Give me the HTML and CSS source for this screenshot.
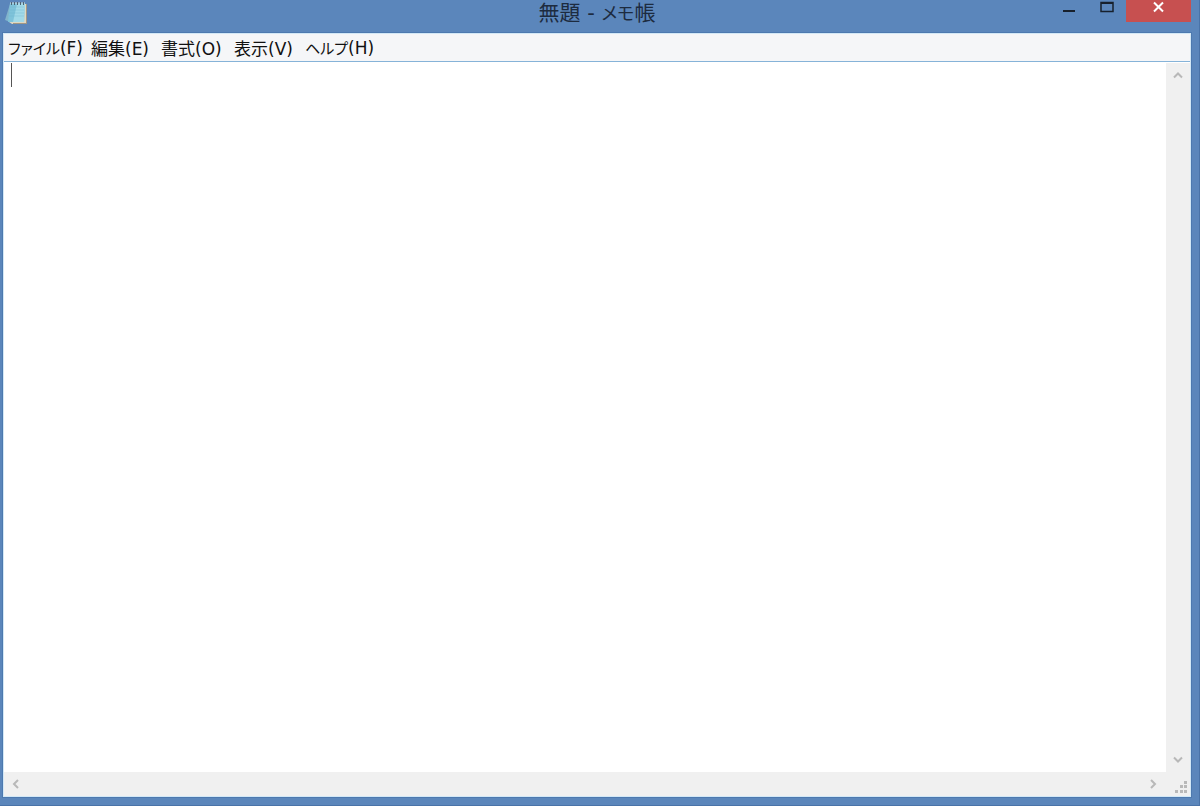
FILE: index.html
```html
<!DOCTYPE html>
<html lang="ja">
<head>
<meta charset="utf-8">
<title>無題 - メモ帳</title>
<link rel="stylesheet" href="styles.css">
</head>
<body>
<div class="window">
  <header class="titlebar">
    <svg class="app-icon" width="24" height="26" viewBox="0 0 24 26" aria-hidden="true">
      <path d="M5 4L0 20L5 22Z" fill="#82b4cb"/>
      <path d="M6 4H22V24H7L4 22Z" fill="#ded9c4"/>
      <path d="M21 4H22V24H8V23H21Z" fill="#a39783"/>
      <path d="M5 3H20L19 22H3Z" fill="#7fc3da"/>
      <path d="M12 4H20L19 22H8Z" fill="#a2dae8"/>
      <path d="M5 7H19M5 10H19M4 13H19M4 16H19" stroke="#6db3cc" stroke-width="1" opacity=".35"/>
      <path d="M5 3H20" stroke="#c9dbe2" stroke-width="1"/>
      <path d="M6.500 2V5M9.500 2V5M12.500 2V5M15.500 2V5M18.500 2V5" stroke="#4f6374" stroke-width="1"/>
    </svg>
    <h1 class="title">無題 - <span class="title-kana">メモ</span>帳</h1>
    <div class="window-buttons">
      <button class="window-button" type="button" aria-label="最小化">
        <svg width="14" height="14" viewBox="0 0 14 14"><path d="M1 11H13" stroke="#17202c" stroke-width="2"/></svg>
      </button>
      <button class="window-button" type="button" aria-label="最大化">
        <svg width="14" height="14" viewBox="0 0 14 14"><path d="M1 2.500H13V11.500H1Z" fill="none" stroke="#17202c" stroke-width="1.500"/><path d="M1 3H13" stroke="#17202c" stroke-width="2"/></svg>
      </button>
      <button class="window-button close" type="button" aria-label="閉じる">
        <svg width="14" height="14" viewBox="0 0 14 14"><path d="M2 2.500L11 11.500M11 2.500L2 11.500" stroke="#fff" stroke-width="2"/></svg>
      </button>
    </div>
  </header>
  <main class="client">
    <nav class="menubar">
      <button class="menu" type="button"><span class="kana">ファイル</span>(F)</button>
      <button class="menu" type="button">編集(E)</button>
      <button class="menu" type="button">書式(O)</button>
      <button class="menu" type="button">表示(V)</button>
      <button class="menu" type="button"><span class="kana">ヘルプ</span>(H)</button>
    </nav>
    <div class="editor">
      <div class="page">
        <textarea class="text" aria-label="本文" spellcheck="false"></textarea>
        <span class="caret"></span>
      </div>
      <div class="scroll vertical">
        <button class="arrow" type="button" aria-label="上へ"><svg width="10" height="10" viewBox="0 0 10 10"><path d="M1 7.500L5 3.500L9 7.500"/></svg></button>
        <button class="arrow" type="button" aria-label="下へ"><svg width="10" height="10" viewBox="0 0 10 10"><path d="M1 2.500L5 6.500L9 2.500"/></svg></button>
      </div>
      <div class="scroll horizontal">
        <button class="arrow" type="button" aria-label="左へ"><svg width="10" height="10" viewBox="0 0 10 10"><path d="M7 1L3 5L7 9"/></svg></button>
        <button class="arrow" type="button" aria-label="右へ"><svg width="10" height="10" viewBox="0 0 10 10"><path d="M2 1L6 5L2 9"/></svg></button>
      </div>
      <div class="grip">
        <svg width="12" height="12" viewBox="0 0 12 12" fill="#b9b9b9"><path d="M9 0h3v3H9zM5 4h3v3H5zM9 4h3v3H9zM0 9h3v3H0zM5 9h3v3H5zM9 9h3v3H9z"/></svg>
      </div>
    </div>
  </main>
</div>
</body>
</html>
```
FILE: styles.css
```css
* {
  box-sizing: border-box;
}

body {
  margin: 0;
  font-family: "DejaVu Sans", "Noto Sans CJK JP", sans-serif;
  font-feature-settings: "palt";
}

button {
  border: 0;
  padding: 0;
  background: none;
  color: inherit;
  font: inherit;
  font-feature-settings: inherit;
}

svg {
  display: block;
}

.window {
  display: flex;
  flex-direction: column;
  height: 100vh;
  padding: 0 8px 8px 3px;
  background: #5b86bb;
  border-right: 1px solid #4a73a8;
  border-bottom: 1px solid #4a73a8;
}

.titlebar {
  display: grid;
  grid-template-columns: 1fr auto 1fr;
  align-items: start;
  height: 33px;
}

.app-icon {
  margin-left: 2px;
}

.title {
  margin: 0;
  font-size: 21px;
  font-weight: 400;
  line-height: 26px;
  color: #1d2b3f;
}

.title-kana {
  font-size: 18px;
}

.window-buttons {
  display: flex;
  justify-content: flex-end;
}

.window-button {
  display: flex;
  justify-content: center;
  width: 38px;
  height: 22px;
}

.close {
  width: 65px;
  background: #c75050;
}

.client {
  flex: 1;
  display: flex;
  flex-direction: column;
  min-height: 0;
  border: 1px solid #d3e8f6;
  outline: 1px solid #4d79af;
}

.menubar {
  display: grid;
  grid-template-columns: 83px 70px 73px 71px auto;
  justify-content: start;
  height: 28px;
  padding: 1px 4px 0;
  background: #f5f6f8;
  border-bottom: 1px solid #86b3d8;
}

.menu {
  font-size: 17px;
  line-height: 26px;
  text-align: left;
  white-space: nowrap;
  color: #111;
}

.kana {
  font-size: 15px;
}

.editor {
  flex: 1;
  display: grid;
  grid-template-columns: 1fr 24px;
  grid-template-rows: 1fr 24px;
  min-height: 0;
  padding-top: 1px;
  background: #fff;
}

.page {
  position: relative;
  display: flex;
}

.text {
  flex: 1;
  border: 0;
  outline: 0;
  padding: 1px 7px;
  resize: none;
  font: inherit;
  font-size: 18px;
  line-height: 24px;
}

.caret {
  position: absolute;
  left: 7px;
  top: 0;
  width: 1px;
  height: 24px;
  background: #555;
}

.scroll {
  display: flex;
  justify-content: space-between;
  background: #f0f0f0;
}

.vertical {
  flex-direction: column;
}

.arrow {
  display: flex;
  align-items: center;
  justify-content: center;
  width: 24px;
  height: 24px;
  fill: none;
  stroke: #b8b8b8;
  stroke-width: 2;
}

.grip {
  display: flex;
  align-items: flex-end;
  justify-content: flex-end;
  padding: 3px;
  background: #f0f0f0;
}
```
